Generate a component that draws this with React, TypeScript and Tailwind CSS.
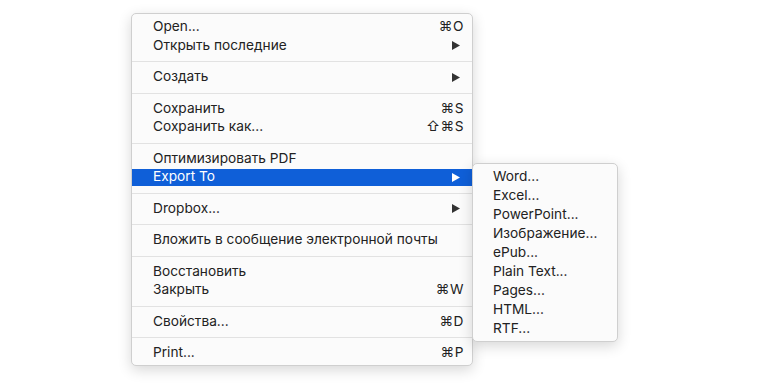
import type { ReactNode } from "react";

type Item = { label: string; shortcut?: ReactNode; arrow?: boolean; active?: boolean };

const groups: Item[][] = [
  [{ label: "Open...", shortcut: "⌘O" }, { label: "Открыть последние", arrow: true }],
  [{ label: "Создать", arrow: true }],
  [{ label: "Сохранить", shortcut: "⌘S" }, { label: "Сохранить как...", shortcut: "⇧⌘S" }],
  [{ label: "Оптимизировать PDF" }, { label: "Export To", arrow: true, active: true }],
  [{ label: "Dropbox...", arrow: true }],
  [{ label: "Вложить в сообщение электронной почты" }],
  [{ label: "Восстановить" }, { label: "Закрыть", shortcut: "⌘W" }],
  [{ label: "Свойства...", shortcut: "⌘D" }],
  [{ label: "Print...", shortcut: "⌘P" }],
];

const exportItems = ["Word...", "Excel...", "PowerPoint...", "Изображение...", "ePub...", "Plain Text...", "Pages...", "HTML...", "RTF..."];

function Arrow({ white }: { white?: boolean }) {
  return (
    <svg width="8" height="9" viewBox="0 0 8 9" className="mr-[4px]">
      <path d="M0 0 L8 4.5 L0 9 Z" fill={white ? "#ffffff" : "#333333"} />
    </svg>
  );
}

function Row({ item }: { item: Item }) {
  return (
    <div className="h-[18.5px] flex items-center">
      <div
        className={`w-full h-[17px] flex items-center justify-between pl-[21px] pr-[8px] ${
          item.active ? "bg-[#0f5fd8] text-white" : "text-[#222222]"
        }`}
      >
        <span>{item.label}</span>
        {item.shortcut && <span className="tracking-[0.5px]">{item.shortcut}</span>}
        {item.arrow && <Arrow white={item.active} />}
      </div>
    </div>
  );
}

export default function App() {
  return (
    <div
      className="w-[760px] h-[387px] bg-white pt-[13px] pl-[131px] text-[13.7px] leading-none"
      style={{ fontFamily: "Inter, 'Noto Sans', 'DejaVu Sans', sans-serif" }}
    >
      <div className="relative w-[342px] h-[353px] bg-[#fbfbfb] border border-[#cfcfcf] rounded-[5px] shadow-[0_4px_14px_rgba(0,0,0,0.16)] pt-[4px] pb-[3px]">
        {groups.map((g, gi) => (
          <div key={gi}>
            {gi > 0 && <div className="h-px bg-[#e2e2e2] my-[6px]" />}
            {g.map((item) => (
              <Row key={item.label} item={item} />
            ))}
          </div>
        ))}

        <div className="absolute left-[340px] top-[149px] w-[146px] h-[179px] bg-[#fbfbfb] border border-[#cfcfcf] rounded-[5px] shadow-[0_4px_14px_rgba(0,0,0,0.16)] py-[3px]">
          {exportItems.map((t) => (
            <div key={t} className="h-[19px] flex items-center pl-[20px] text-[#222222]">
              {t}
            </div>
          ))}
        </div>
      </div>
    </div>
  );
}
